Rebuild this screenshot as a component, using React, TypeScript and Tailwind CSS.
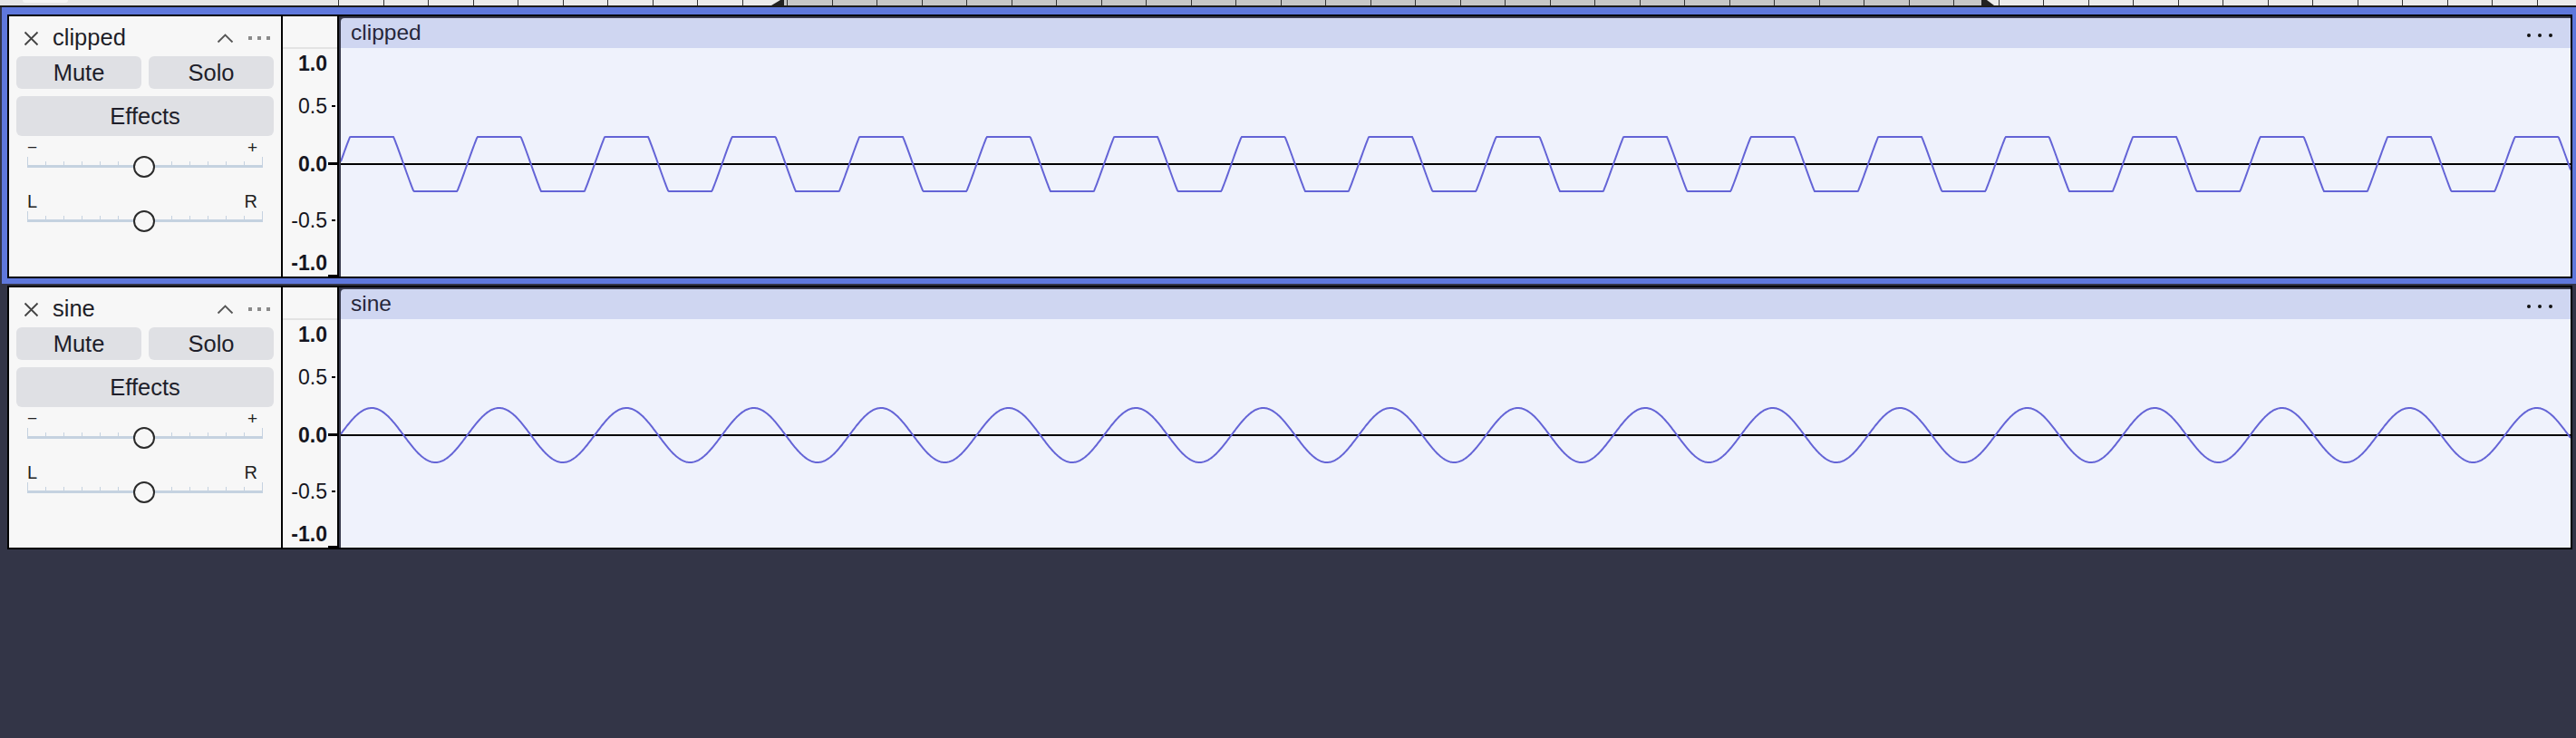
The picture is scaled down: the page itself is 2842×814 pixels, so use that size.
import React from "react"

const BLUE = "#5f78dc"
const PERIOD = 140.5
const WAVE_W = 2460
const WAVE_H = 252
const CENTER = 128

function wavePath(amp: number, clip: number | null) {
  let d = ""
  for (let x = 0; x <= WAVE_W; x++) {
    let v = amp * Math.sin((2 * Math.PI * (x + 1)) / PERIOD)
    if (clip !== null) v = Math.max(-clip, Math.min(clip, v))
    d += (x === 0 ? "M" : "L") + x + " " + (CENTER - v).toFixed(2)
  }
  return d
}

const scaleLabels = [
  { text: "1.0", cls: "top-[52px] font-bold" },
  { text: "0.5", cls: "top-[99px]" },
  { text: "0.0", cls: "top-[163px] font-bold" },
  { text: "-0.5", cls: "top-[225px]" },
  { text: "-1.0", cls: "top-[272px] font-bold" },
]

function Timeline() {
  const ticks: number[] = []
  for (let x = 1; x < 2470; x += 49.5) ticks.push(x)
  return (
    <div className="flex h-[8px] border-b-2 border-[#1c1c1c]">
      <div className="w-[372px] shrink-0 bg-[#e6e6e6]">
        <div className="ml-[25px] h-[3px] w-[50px] rounded-b-[3px] bg-[#f4f4f4]" />
      </div>
      <svg width={2470} height={6} className="block shrink-0">
        <rect x={0} y={0} width={2470} height={6} fill="#ebebeb" />
        <rect x={488} y={0} width={1330} height={6} fill="#c7c7c7" />
        {ticks.map((x) => (
          <line key={x} x1={Math.round(x) + 0.5} y1={0} x2={Math.round(x) + 0.5} y2={6} stroke="#333" strokeWidth={1} />
        ))}
        <polygon points="479,6 489,0 493,0 493,6" fill="#222" />
        <polygon points="1814,0 1820,0 1828,6 1814,6" fill="#222" />
      </svg>
    </div>
  )
}

function Slider({ left, right, labelCls }: { left: string; right: string; labelCls: string }) {
  return (
    <div className="px-[12px]">
      <div className={"flex h-[22px] items-center justify-between pr-[6px] leading-none text-[#222] " + labelCls}>
        <span>{left}</span>
        <span>{right}</span>
      </div>
      <div className="relative">
        <div className="flex h-[9px] items-end justify-between">
          {Array.from({ length: 14 }, (_, i) => (
            <span key={i} className={i === 0 || i === 13 ? "h-[9px] w-px bg-[#c5d2e0]" : "h-[4px] w-px bg-[#c5d2e0]"} />
          ))}
        </div>
        <div className="h-[3px] bg-[#c5d2e0]" />
        <span className="absolute bottom-[1.5px] left-[129px] h-[24px] w-[24px] -translate-x-1/2 translate-y-1/2 rounded-full border-2 border-[#2b2b2b] bg-[#f7f7f7]" />
      </div>
    </div>
  )
}

function TrackHeader({ name }: { name: string }) {
  return (
    <div className="w-[302px] shrink-0 border-r-2 border-black bg-[#f7f7f7] px-[8px] pt-[4px]">
      <div className="flex h-[40px] items-center pl-[8px] pr-[4px]">
        <svg width="17" height="17" viewBox="0 0 17 17" className="shrink-0">
          <path d="M1.5 1.5L15.5 15.5M15.5 1.5L1.5 15.5" stroke="#444" strokeWidth="1.8" />
        </svg>
        <span className="ml-[15px] text-[25.5px] leading-none text-[#1e1e28]">{name}</span>
        <span className="flex-1" />
        <svg width="19" height="12" viewBox="0 0 19 12" className="shrink-0">
          <path d="M1.5 10.5L9.5 2.5L17.5 10.5" fill="none" stroke="#555" strokeWidth="1.8" />
        </svg>
        <span className="ml-[16px] flex gap-[6px]">
          <span className="h-[4px] w-[4px] bg-[#8a8a8a]" />
          <span className="h-[4px] w-[4px] bg-[#8a8a8a]" />
          <span className="h-[4px] w-[4px] bg-[#8a8a8a]" />
        </span>
      </div>
      <div className="flex h-[36px] gap-[8px] text-[25.5px] text-[#1e1e2a]">
        <button className="flex flex-1 items-center justify-center rounded-[6px] bg-[#dfe0e4]">Mute</button>
        <button className="flex flex-1 items-center justify-center rounded-[6px] bg-[#dfe0e4]">Solo</button>
      </div>
      <button className="mt-[8px] flex h-[44px] w-full items-center justify-center rounded-[6px] bg-[#dfe0e4] text-[25.5px] text-[#1e1e2a]">
        Effects
      </button>
      <div className="mt-[1px]">
        <Slider left="−" right="+" labelCls="text-[19px]" />
      </div>
      <div className="mt-[26px]">
        <Slider left="L" right="R" labelCls="text-[20px]" />
      </div>
    </div>
  )
}

function Scale() {
  return (
    <div className="relative w-[62px] shrink-0 border-r-2 border-black bg-[#f7f7f7]">
      <div className="h-[36px] border-b-2 border-[#e3e3e3]" />
      {scaleLabels.map((l) => (
        <span key={l.text} className={"absolute right-[11px] -translate-y-1/2 text-[23px] leading-none text-[#151520] " + l.cls}>
          {l.text}
        </span>
      ))}
      <span className="absolute right-[2px] top-[98px] h-[2px] w-[4px] bg-black" />
      <span className="absolute right-0 top-[161px] h-[3px] w-[10px] bg-black" />
      <span className="absolute right-[2px] top-[224px] h-[2px] w-[4px] bg-black" />
      <span className="absolute bottom-0 right-0 h-[2px] w-[10px] bg-black" />
    </div>
  )
}

function Clip({ name, clipped }: { name: string; clipped: boolean }) {
  const d = clipped ? wavePath(63, 30) : wavePath(30, null)
  return (
    <div className="flex flex-1 flex-col overflow-hidden rounded-tl-[6px] border-l-2 border-t-2 border-[#3a3c4f]">
      <div className="flex h-[33px] shrink-0 items-center justify-between bg-[#cfd6f1] pl-[11px] pr-[20px]">
        <span className="text-[24.5px] leading-none text-[#26263a]">{name}</span>
        <span className="mt-[5px] flex gap-[8px]">
          <span className="h-[4px] w-[4px] rounded-full bg-[#111]" />
          <span className="h-[4px] w-[4px] rounded-full bg-[#111]" />
          <span className="h-[4px] w-[4px] rounded-full bg-[#111]" />
        </span>
      </div>
      <div className="flex-1 bg-[#eff2fc]">
        <svg width={WAVE_W} height={WAVE_H} viewBox={`0 0 ${WAVE_W} ${WAVE_H}`} className="block">
          <line x1={0} y1={CENTER} x2={WAVE_W} y2={CENTER} stroke="#000" strokeWidth={2} />
          <path d={d} fill="none" stroke="#6464d6" strokeWidth={2} />
        </svg>
      </div>
    </div>
  )
}

function Track({ name, clipped }: { name: string; clipped: boolean }) {
  return (
    <div className="flex h-[291px] w-[2830px] border-2 border-black bg-[#333547]">
      <TrackHeader name={name} />
      <Scale />
      <Clip name={name} clipped={clipped} />
    </div>
  )
}

export default function App() {
  return (
    <div className="h-[814px] w-full overflow-hidden bg-[#333547] font-['Liberation_Sans',Arial,sans-serif]">
      <Timeline />
      <div className="ml-[2px] w-[2842px] border-x-[6px] border-b-[6px] border-t-8" style={{ borderColor: BLUE }}>
        <Track name="clipped" clipped />
      </div>
      <div className="ml-[8px] mt-[2px]">
        <Track name="sine" clipped={false} />
      </div>
    </div>
  )
}
